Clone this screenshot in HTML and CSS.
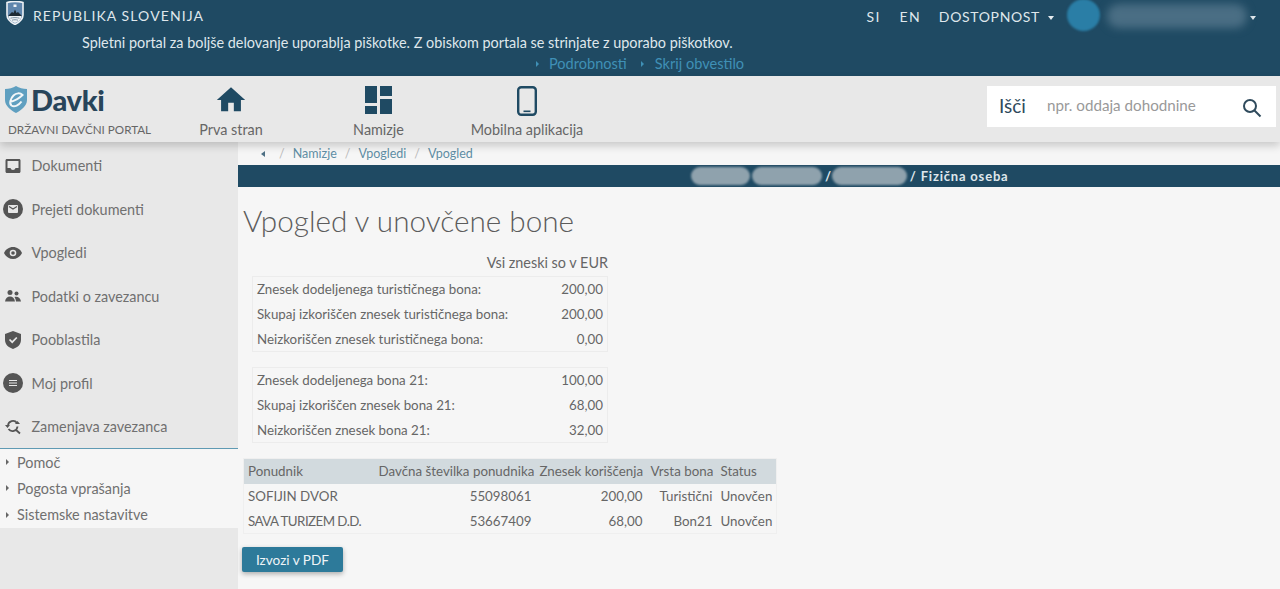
FILE: index.html
```html
<!DOCTYPE html>
<html lang="sl">
<head>
<meta charset="utf-8">
<title>Davki</title>
<link rel="stylesheet" href="styles.css">
</head>
<body>
<div class="top">
  <div class="top-row">
    <div class="rs">
      <svg class="arms" viewBox="0 0 18 24" width="18" height="24"><path d="M1 1.500C6 .2 12 .2 17 1.500V14C17 19.500 12 22 9 23.500C6 22 1 19.500 1 14Z" fill="#5f86ad" stroke="#eef2f5" stroke-width="1.600"/><path d="M7.500 3.500H10.500V6H7.500Z" fill="#eef2f5"/><path d="M2.500 14.500L6 11L7.500 12L9 8.500L10.500 12L12 11L15.500 14.500V15.500H2.500Z" fill="#1d2a33"/><path d="M2.500 15H15.500C15 19 11.500 21 9 22C6.500 21 3 19 2.500 15Z" fill="#eef2f5"/><path d="M4.500 17.200C6.500 16.400 11.500 16.400 13.500 17.200M6 19.200C7.500 18.600 10.500 18.600 12 19.200" fill="none" stroke="#7f95a5" stroke-width="1"/></svg>
      <span class="rs-name">REPUBLIKA SLOVENIJA</span>
    </div>
    <div class="top-right">
      <span class="tl tl-si">SI</span>
      <span class="tl tl-en">EN</span>
      <span class="tl tl-dost">DOSTOPNOST</span><i class="caret"></i>
      <span class="avatar"></span>
      <span class="blur-name"></span><i class="caret caret-user"></i>
    </div>
  </div>
  <div class="cookie">
    <p class="cookie-text">Spletni portal za boljše delovanje uporablja piškotke. Z obiskom portala se strinjate z uporabo piškotkov.</p>
    <p class="cookie-links"><i class="arrow arrow-blue"></i><a>Podrobnosti</a><i class="arrow arrow-blue arrow-second"></i><a>Skrij obvestilo</a></p>
  </div>
</div>

<header class="head">
  <div class="brand">
    <div class="logo">
      <svg viewBox="0 0 22 27" width="22" height="27"><path d="M0 3C4 3 8 2 11 0C14 2 18 3 22 3V14C22 20 16 24.500 11 27C6 24.500 0 20 0 14Z" fill="#5f9fc0"/><path d="M5 16C9 15 14 12.500 17.500 9C15 6.500 11 7 8.500 9.500C5.500 12.500 4 17.500 6.500 19.500C9.500 21.500 14 19 16.500 15.500" fill="none" stroke="#f2f6f8" stroke-width="2"/></svg>
      <span class="logo-name">Davki</span>
    </div>
    <div class="portal">DRŽAVNI DAVČNI PORTAL</div>
  </div>
  <a class="nav nav-home">
    <svg viewBox="0 0 24 24" width="34" height="34"><path d="M10 20v-6h4v6h5v-8h3L12 3 2 12h3v8z" fill="#1f4a63"/></svg>
    <span>Prva stran</span>
  </a>
  <a class="nav nav-desk">
    <svg viewBox="0 0 27 28" width="27" height="28"><path d="M0 0H12V17H0ZM15 0H27V10H15ZM15 13H27V28H15ZM0 20H12V28H0Z" fill="#1f4a63"/></svg>
    <span>Namizje</span>
  </a>
  <a class="nav nav-mob">
    <svg viewBox="0 0 20 30" width="20" height="30"><rect x="1.200" y="1.200" width="17.600" height="27.600" rx="3" fill="none" stroke="#1f4a63" stroke-width="2.400"/><rect x="6.500" y="24.500" width="7" height="1.600" fill="#1f4a63"/></svg>
    <span>Mobilna aplikacija</span>
  </a>
  <div class="search">
    <span class="search-label">Išči</span>
    <span class="search-ph">npr. oddaja dohodnine</span>
    <svg viewBox="0 0 20 20" width="20" height="20"><circle cx="8" cy="8" r="6" fill="none" stroke="#2f4a5c" stroke-width="2"/><path d="M12.500 12.500L18.500 18.500" stroke="#2f4a5c" stroke-width="2"/></svg>
  </div>
</header>

<div class="page">
  <aside class="side">
    <ul class="menu">
      <li><svg viewBox="0 0 16 16" width="16" height="16"><path d="M2 1H14C15 1 15.500 1.600 15.500 2.500V13.500C15.500 14.400 15 15 14 15H2C1 15 .5 14.400 .5 13.500V2.500C.5 1.600 1 1 2 1ZM2.500 3V10H5.500C5.800 11.200 6.800 12 8 12S10.200 11.200 10.500 10H13.500V3Z" fill="#555" fill-rule="evenodd"/></svg>Dokumenti</li>
      <li><svg viewBox="0 0 20 20" width="20" height="20"><circle cx="10" cy="10" r="10" fill="#555"/><rect x="5" y="6" width="10" height="8" rx="1" fill="#e8e8e8"/><path d="M6 7.500L10 10L14 7.500" fill="none" stroke="#555" stroke-width="1.200"/></svg>Prejeti dokumenti</li>
      <li><svg viewBox="0 0 18 12" width="18" height="12"><path d="M9 0C5 0 1.500 2.500 0 6C1.500 9.500 5 12 9 12S16.500 9.500 18 6C16.500 2.500 13 0 9 0Z" fill="#555"/><circle cx="9" cy="6" r="3.300" fill="#e8e8e8"/><circle cx="9" cy="6" r="1.800" fill="#555"/></svg>Vpogledi</li>
      <li><svg viewBox="0 0 16 12" width="16" height="12"><circle cx="5" cy="2.500" r="2.500" fill="#555"/><circle cx="11.500" cy="3.500" r="2" fill="#555"/><path d="M0 11.500C.5 8 2.500 6.500 5 6.500S9.500 8 10 11.500ZM11 11.500C10.800 9.500 10.200 8 9.400 7C12.500 6 15.500 7.800 16 11.500Z" fill="#555"/></svg>Podatki o zavezancu</li>
      <li><svg viewBox="0 0 16 18" width="16" height="18"><path d="M8 0L16 3V9C16 13.500 12.500 16.500 8 18C3.500 16.500 0 13.500 0 9V3Z" fill="#555"/><path d="M4.500 8.500L7.200 11.200L11.800 6.500" fill="none" stroke="#e8e8e8" stroke-width="1.700"/></svg>Pooblastila</li>
      <li><svg viewBox="0 0 20 20" width="20" height="20"><circle cx="10" cy="10" r="10" fill="#555"/><path d="M6 7.500H14M6 10H14M6 12.500H14" stroke="#e8e8e8" stroke-width="1.200"/></svg>Moj profil</li>
      <li><svg viewBox="0 0 16 16" width="16" height="16"><path d="M3 6.500A5 5 0 0 1 12 4M12.500 7.500A5 5 0 0 1 3.500 10M10.500 10.500L15 14.500" fill="none" stroke="#555" stroke-width="1.800"/><path d="M0 6H5L2.500 9ZM10 5H15L12.500 2Z" fill="#555"/></svg>Zamenjava zavezanca</li>
    </ul>
    <ul class="sublinks">
      <li><i class="arrow"></i>Pomoč</li>
      <li><i class="arrow"></i>Pogosta vprašanja</li>
      <li><i class="arrow"></i>Sistemske nastavitve</li>
    </ul>
  </aside>
  <main class="main">
    <nav class="crumbs">
      <i class="arrow-left"></i>
      <span class="sep">/</span><a>Namizje</a>
      <span class="sep">/</span><a>Vpogledi</a>
      <span class="sep">/</span><a>Vpogled</a>
    </nav>
    <div class="idbar">
      <span class="blur b1"></span><span class="blur b2"></span>
      <span class="slash">/</span>
      <span class="blur b3"></span>
      <span class="idtext">/ Fizična oseba</span>
    </div>
    <div class="content">
      <h1>Vpogled v unovčene bone</h1>
      <div class="eur">Vsi zneski so v EUR</div>
      <table class="sum">
        <tr><td>Znesek dodeljenega turističnega bona:</td><td class="r">200,00</td></tr>
        <tr><td>Skupaj izkoriščen znesek turističnega bona:</td><td class="r">200,00</td></tr>
        <tr><td>Neizkoriščen znesek turističnega bona:</td><td class="r">0,00</td></tr>
      </table>
      <table class="sum sum-second">
        <tr><td>Znesek dodeljenega bona 21:</td><td class="r">100,00</td></tr>
        <tr><td>Skupaj izkoriščen znesek bona 21:</td><td class="r">68,00</td></tr>
        <tr><td>Neizkoriščen znesek bona 21:</td><td class="r">32,00</td></tr>
      </table>
      <table class="data">
        <colgroup><col class="c1"><col class="c2"><col class="c3"><col class="c4"><col class="c5"></colgroup>
        <thead>
          <tr><th>Ponudnik</th><th class="r">Davčna številka ponudnika</th><th class="r">Znesek koriščenja</th><th class="r">Vrsta bona</th><th>Status</th></tr>
        </thead>
        <tbody>
          <tr><td>SOFIJIN DVOR</td><td class="r">55098061</td><td class="r">200,00</td><td class="r">Turistični</td><td>Unovčen</td></tr>
          <tr><td class="tight">SAVA TURIZEM D.D.</td><td class="r">53667409</td><td class="r">68,00</td><td class="r">Bon21</td><td>Unovčen</td></tr>
        </tbody>
      </table>
      <button class="btn" type="button">Izvozi v PDF</button>
    </div>
  </main>
</div>
</body>
</html>
```
FILE: styles.css
```css
* { box-sizing: border-box; }
html, body { margin: 0; padding: 0; height: 589px; overflow: hidden; }
body { font-family: Lato, "Open Sans", sans-serif; font-size: 14px; color: #666; background: #f6f6f6; }
p, ul, h1 { margin: 0; padding: 0; }
ul { list-style: none; }
i { display: block; }

.top { height: 76px; background: #1f4a63; color: #e6ecf0; overflow: hidden; }
.top-row { height: 33px; display: flex; justify-content: space-between; align-items: flex-start; }
.rs { display: flex; align-items: center; padding: 3px 0 0 6px; }
.arms { display: block; margin-top: -2px; }
.rs-name { margin-left: 9px; margin-top: 3px; font-size: 14px; letter-spacing: 1.100px; color: #dfe7ec; }
.top-right { display: flex; align-items: center; padding-top: 1px; padding-right: 24px; }
.tl { font-size: 14px; letter-spacing: 1.250px; color: #dfe7ec; }
.tl-si { margin-right: 19px; }
.tl-en { margin-right: 18px; }
.tl-dost { letter-spacing: .65px; }
.caret { width: 0; height: 0; margin-left: 8px; margin-top: 4px; border-left: 3.500px solid transparent; border-right: 3.500px solid transparent; border-top: 4px solid #e6ecf0; }
.avatar { width: 33px; height: 32px; margin-left: 13px; margin-top: -2px; border-radius: 50%; background: #2a7ea6; filter: blur(1px); }
.blur-name { width: 140px; height: 24px; margin-left: 7px; border-radius: 12px; background: #4a6e84; filter: blur(4px); }
.caret-user { margin-left: 3px; }
.cookie { color: #dfe7ec; line-height: 20px; }
.cookie-text { padding-left: 82px; font-size: 14.400px; }
.cookie-links { display: flex; align-items: center; padding: 1px 0 0 536px; font-size: 14.550px; color: #3f90b6; }
.arrow { width: 0; height: 0; border-top: 3px solid transparent; border-bottom: 3px solid transparent; border-left: 3px solid #666; margin-right: 10px; }
.arrow-blue { border-left-color: #3f90b6; }
.arrow-second { margin-left: 14px; margin-right: 11px; }

.head { position: relative; z-index: 2; height: 66px; background: #e8e8e8; display: flex; box-shadow: 0 4px 8px rgba(0,0,0,.18); }
.brand { width: 167px; padding: 8px 0 0 5px; }
.logo { display: flex; align-items: center; gap: 4px; height: 30px; }
.logo svg { display: block; }
.logo-name { font-size: 29px; font-weight: 900; color: #28455a; letter-spacing: -.3px; }
.portal { font-size: 11.650px; color: #666; margin: 9px 0 0 3px; white-space: nowrap; }
.nav { display: flex; flex-direction: column; align-items: center; justify-content: space-between; height: 62px; padding-top: 7px; font-size: 14.400px; color: #666; }
.nav svg { display: block; }
.nav-home { width: 128px; padding-top: 7px; }
.nav-desk { width: 171px; margin-left: -2px; padding-top: 10px; }
.nav-mob { width: 130px; margin-left: -2px; margin-right: auto; padding-top: 10px; }
.search { display: flex; align-items: center; width: 289px; height: 41px; margin: 10px 4px 0 0; background: #fff; padding: 0 14px 3px 12px; }
.search-label { font-size: 19px; color: #2f4a5c; }
.search-ph { flex: 1; margin-left: 21px; font-size: 15.200px; color: #999; }
.search svg { margin-top: 6px; }

.page { display: flex; height: 447px; }
.side { width: 238px; flex: none; background: #e8e8e8; }
.menu { height: 308px; border-bottom: 2px solid #5f9ab3; padding-top: 2px; }
.menu li { display: flex; align-items: center; height: 43.500px; position: relative; padding-left: 31.500px; font-size: 14.400px; color: #707070; }
.menu svg { position: absolute; left: 13px; top: 50%; transform: translate(-50%, -50%); }
.sublinks { background: #f6f6f6; height: 79px; padding-top: 0; margin-top: -1px; }
.sublinks li { display: flex; align-items: center; height: 26.300px; padding-left: 6px; font-size: 14.400px; color: #707070; }
.sublinks .arrow { margin-right: 8px; }

.main { flex: 1; min-width: 0; }
.crumbs { display: flex; align-items: center; height: 23px; padding-left: 23px; font-size: 12.500px; color: #5f8ea5; }
.arrow-left { width: 0; height: 0; border-top: 3px solid transparent; border-bottom: 3px solid transparent; border-right: 4px solid #4d6f84; margin-right: 14px; }
.sep { color: #bbb; margin-right: 8px; }
.crumbs a { margin-right: 8px; }
.idbar { display: flex; align-items: center; height: 22px; background: #1f4a63; padding-left: 453px; font-size: 13px; font-weight: 700; color: #dfe7ec; letter-spacing: .8px; }
.blur { height: 18px; background: #8fa2ad; border-radius: 9px; filter: blur(1px); }
.b1 { width: 59px; }
.b2 { width: 70px; margin-left: 2px; }
.b3 { width: 75px; }
.slash { margin: 0 0 0 3px; }
.idtext { margin-left: 3px; }

.content { padding: 14px 0 0 5px; }
h1 { font-size: 29.700px; font-weight: 300; color: #5c5c5c; line-height: 40px; }
.eur { width: 365px; margin-top: 12px; height: 20px; line-height: 20px; text-align: right; font-size: 14.400px; color: #666; }
table { border-collapse: collapse; font-size: 13.330px; color: #666; }
.r { text-align: right; }
.sum { width: 356px; margin: 3px 0 0 9px; border: 1px solid #ececec; }
.sum td { height: 25px; padding: 0 4px; line-height: 20px; }
.sum-second { margin-top: 15px; }
.data { table-layout: fixed; width: 533px; margin-top: 15px; border: 1px solid #efefef; }
.c1 { width: 131px; }
.c2 { width: 161px; }
.c3 { width: 111px; }
.c4 { width: 70px; }
.c5 { width: 60px; }
.data th { height: 25px; padding: 0 4px; background: #d2dade; font-weight: 400; white-space: nowrap; text-align: left; }
.data th.r { text-align: right; }
.data td { height: 25px; padding: 0 4px; white-space: nowrap; }
.data td.tight { letter-spacing: -.55px; }
.btn { display: block; width: 101px; height: 25px; margin: 13px 0 0 -1px; background: #2d7a9a; border: 0; border-radius: 2px; color: #eef4f7; font: 400 13.600px Lato, sans-serif; padding: 0; box-shadow: 0 2px 5px rgba(0,0,0,.3); }
```
